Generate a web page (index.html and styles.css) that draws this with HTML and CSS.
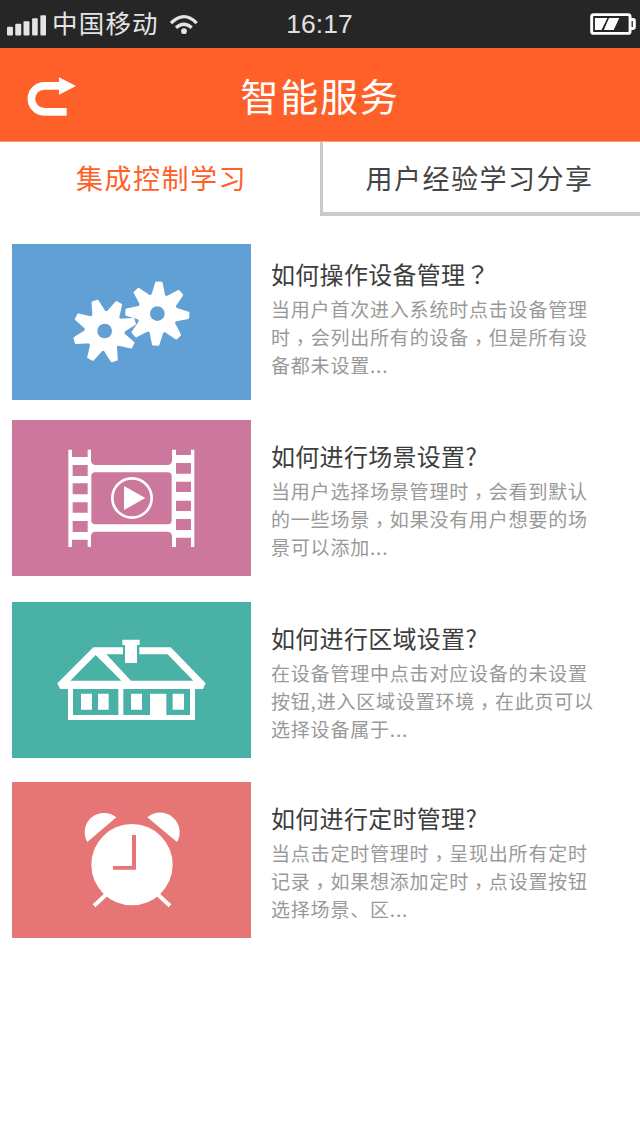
FILE: index.html
```html
<!DOCTYPE html>
<html lang="zh-CN">
<head>
    <meta charset="UTF-8">
    <meta name="viewport" content="width=device-width, initial-scale=1.0">
    <title>智能服务</title>
    <link rel="stylesheet" href="styles.css">
</head>
<body>

    <div class="status">
        <div class="status-left">
            <svg class="signal" viewBox="21 44 118 62">
                <rect x="21" y="79" width="18" height="26" rx="3"/>
                <rect x="46" y="70" width="18" height="35" rx="3"/>
                <rect x="71" y="62" width="18" height="43" rx="3"/>
                <rect x="97" y="53" width="17" height="52" rx="3"/>
                <rect x="122" y="44" width="17" height="61" rx="3"/>
            </svg>
            <span class="carrier">中国移动</span>
            <svg class="wifi" viewBox="509 43 84 62">
                <circle cx="551" cy="94" r="8.5"/>
                <path d="M512 70Q551 31 589 70M527 84Q551 63 574 84"/>
            </svg>
        </div>
        <span class="time">16:17</span>
        <svg class="battery" viewBox="90 36 138 67">
            <rect class="case" x="94" y="41" width="117" height="57" rx="6"/>
            <path class="case" d="M214 56H221Q224 56 224 60V79Q224 83 221 83H214"/>
            <path d="M104 51H142L124 88H104ZM147 51H178L161 88H131Z"/>
        </svg>
    </div>

    <div class="header">
        <a class="back" href="#">
            <svg viewBox="81 231 147 117">
                <path class="line" d="M200 335.5H133A39 39 0 0 1 133 257.5H180"/>
                <path d="M177 232L228 258L177 284Z"/>
            </svg>
        </a>
        <h1>智能服务</h1>
    </div>

    <div class="tabs">
        <a class="tab active">集成控制学习</a>
        <a class="tab">用户经验学习分享</a>
    </div>

    <div class="list">
        <div class="item first">
            <svg class="thumb blue" viewBox="-144 -78 717 468">
                <defs>
                    <path id="tooth" d="M-8 -93H8L19 -50H-19Z"/>
                    <g id="gear">
                        <circle r="57"/>
                        <use href="#tooth"/>
                        <use href="#tooth" transform="rotate(45)"/>
                        <use href="#tooth" transform="rotate(90)"/>
                        <use href="#tooth" transform="rotate(135)"/>
                        <use href="#tooth" transform="rotate(180)"/>
                        <use href="#tooth" transform="rotate(225)"/>
                        <use href="#tooth" transform="rotate(270)"/>
                        <use href="#tooth" transform="rotate(315)"/>
                    </g>
                </defs>
                <use class="gear" href="#gear" transform="translate(134 183) rotate(27)"/>
                <use class="gear" href="#gear" transform="translate(292 131) rotate(3)"/>
                <circle class="hole" cx="134" cy="183" r="22"/>
                <circle class="hole" cx="292" cy="131" r="22"/>
            </svg>
            <div class="text">
                <h2>如何操作设备管理<span class="mark" lang="zh-TW">？</span></h2>
                <p>当用户首次进入系统时点击设备管理<br>时<span class="mark" lang="zh-TW">，</span>会列出所有的设备<span class="mark" lang="zh-TW">，</span>但是所有设<br>备都未设置...</p>
            </div>
        </div>

        <div class="item second">
            <svg class="thumb pink" viewBox="-129 -60 717 468">
                <path d="M40 29H51V51H98V29H108V63Q110 75 122 75H337Q349 75 351 63V29H363V45H408V29H418V321H408V293H363V321H351V287Q349 275 337 275H122Q110 275 108 287V321H98V299H51V321H40Z"/>
                <rect class="hole" x="109" y="97" width="241" height="156" rx="12"/>
                <path class="hole" d="M53 75H98V108H53ZM53 130H98V163H53ZM53 187H98V218H53ZM53 243H98V276H53ZM363 69H408V101H363ZM363 125H408V156H363ZM363 182H408V213H363ZM363 237H408V270H363Z"/>
                <circle class="ring" cx="231" cy="174" r="59"/>
                <path d="M207 138L271 174L207 210Z"/>
            </svg>
            <div class="text">
                <h2>如何进行场景设置?</h2>
                <p>当用户选择场景管理时<span class="mark" lang="zh-TW">，</span>会看到默认<br>的一些场景<span class="mark" lang="zh-TW">，</span>如果没有用户想要的场<br>景可以添加...</p>
            </div>
        </div>

        <div class="item third">
            <svg class="thumb green" viewBox="-114 -84 717 468">
                <path d="M130 52H362L467 160L459 177H435V270H54V177H30L22 160Z"/>
                <path class="hole" d="M61 152L137 75L214 152ZM169 73H353L430 152H243ZM219 50H268V74H219Z"/>
                <path class="hole" d="M69 177H205V255H69ZM220 177H420V255H220Z"/>
                <path d="M217 29H269V45H261V99H225V45H217Z"/>
                <path d="M93 191H126V239H93ZM144 191H176V239H144ZM243 191H276V239H243ZM368 191H402V239H368ZM300 191H349V256H300Z"/>
            </svg>
            <div class="text">
                <h2>如何进行区域设置?</h2>
                <p>在设备管理中点击对应设备的未设置<br>按钮,进入区域设置环境<span class="mark" lang="zh-TW">，</span>在此页可以<br>选择设备属于...</p>
            </div>
        </div>

        <div class="item">
            <svg class="thumb red" viewBox="-174 -54 717 468">
                <circle cx="186" cy="194" r="122"/>
                <path d="M52 126A58 58 0 0 1 139 52ZM321 126A58.7 58.7 0 0 0 232 52Z"/>
                <path class="legs" d="M72 317L108 284M300 317L264 284"/>
                <path class="hole" d="M186 105H198V209H129V198H186Z"/>
            </svg>
            <div class="text">
                <h2>如何进行定时管理?</h2>
                <p>当点击定时管理时<span class="mark" lang="zh-TW">，</span>呈现出所有定时<br>记录<span class="mark" lang="zh-TW">，</span>如果想添加定时<span class="mark" lang="zh-TW">，</span>点设置按钮<br>选择场景、区...</p>
            </div>
        </div>
    </div>

</body>
</html>
```

FILE: styles.css
```css
* {
    box-sizing: border-box;
    margin: 0;
    padding: 0;
}

body {
    width: 640px;
    min-height: 1136px;
    background: #fff;
    font-family: "Noto Sans CJK SC", sans-serif;
}

svg {
    display: block;
    fill: #fff;
}

/* status bar */
.status {
    display: grid;
    grid-template-columns: 1fr auto 1fr;
    align-items: center;
    height: 48px;
    padding: 0 4px 0 7px;
    background: #262626;
}

.status-left {
    display: flex;
    align-items: center;
}

.signal {
    width: 39px;
    height: 21px;
    margin-top: 2px;
    fill: #e4e4e4;
}

.carrier {
    margin: 0 11px 0 6px;
    padding-bottom: 4px;
    font-size: 25.5px;
    line-height: 44px;
    letter-spacing: 1.2px;
    color: #e4e4e4;
}

.wifi {
    width: 28px;
    height: 21px;
    fill: #e4e4e4;
}

.wifi path {
    fill: none;
    stroke: #e4e4e4;
    stroke-width: 10;
}

.time {
    margin-right: 4px;
    font-family: "Liberation Sans", Arial, sans-serif;
    font-size: 26.5px;
    color: #e0e0e0;
}

.battery {
    width: 46px;
    height: 22px;
    justify-self: end;
}

.battery .case {
    fill: none;
    stroke: #fff;
    stroke-width: 9;
}

/* title bar */
.header {
    display: grid;
    grid-template-columns: 1fr auto 1fr;
    align-items: center;
    height: 94px;
    padding: 0 27px;
    background: #ff5f29;
    border-bottom: 1px solid #ff9a74;
}

.back svg {
    width: 49px;
    height: 39px;
    margin-top: 4px;
}

.back .line {
    fill: none;
    stroke: #fff;
    stroke-width: 23;
}

.header h1 {
    font-size: 38px;
    font-weight: 400;
    line-height: 93px;
    letter-spacing: 1.7px;
    color: #fff;
}

/* tabs */
.tabs {
    display: flex;
    height: 74px;
}

.tab {
    width: 320px;
    padding-right: 4px;
    border-left: 3px solid #cacaca;
    border-bottom: 4px solid #cacaca;
    font-size: 27px;
    line-height: 72px;
    letter-spacing: 1.5px;
    text-align: center;
    color: #444;
}

.tab.active {
    padding-right: 0;
    border-color: transparent;
    color: #ff5f29;
}

/* list */
.list {
    padding: 28px 12px 0;
}

.item {
    display: flex;
    height: 156px;
}

.first {
    margin-bottom: 20px;
}

.second {
    margin-bottom: 26px;
}

.third {
    margin-bottom: 24px;
}

.thumb {
    width: 239px;
    height: 156px;
    flex-shrink: 0;
}

.blue { background: #61a0d4; }
.pink { background: #cc779c; }
.green { background: #4ab1a6; }
.red { background: #e67675; }

.blue .hole { fill: #61a0d4; }
.pink .hole { fill: #cc779c; }
.green .hole { fill: #4ab1a6; }
.red .hole { fill: #e67675; }

.gear {
    stroke: #fff;
    stroke-width: 6;
    stroke-linejoin: round;
}

.ring {
    fill: none;
    stroke: #fff;
    stroke-width: 8;
}

.legs {
    stroke: #fff;
    stroke-width: 12;
}

.text {
    padding: 22px 0 0 20px;
    white-space: nowrap;
}

.first .text {
    padding-top: 16px;
}

.text h2 {
    font-size: 24px;
    font-weight: 400;
    line-height: 28px;
    letter-spacing: 0.3px;
    color: #3d3d3d;
}

.text p {
    margin-top: 7px;
    font-size: 19px;
    line-height: 28px;
    letter-spacing: 0.8px;
    color: #999;
}

/* full-width punctuation centred in its cell */
.mark {
    font-family: "Noto Sans CJK TC", sans-serif;
    line-height: 1;
}

p .mark {
    vertical-align: -5px;
}
```
